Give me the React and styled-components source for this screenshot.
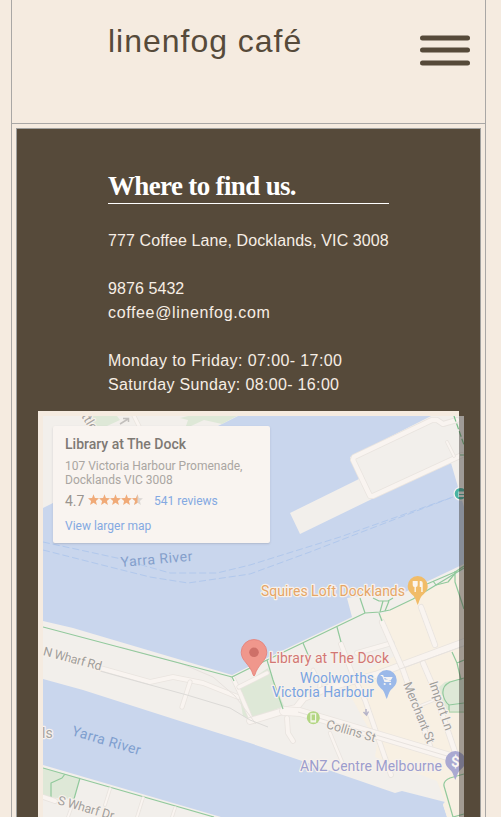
import React from "react";
import styled, { createGlobalStyle } from "styled-components";

const GlobalStyle = createGlobalStyle`
  * { box-sizing: border-box; }
  html, body { margin: 0; padding: 0; background: #f5ebe0; }
  body { height: 817px; overflow: hidden; }
`;

const Page = styled.div`
  height: 817px;
  width: 501px;
  padding: 0 15px 0 11px;
  background: #f5ebe0;
  color: #564a3a;
  overflow: hidden;
`;
const Frame = styled.div`
  height: 817px;
  border-left: 1px solid #a9a7a5;
  border-right: 1px solid #a9a7a5;
  display: flex;
  flex-direction: column;
`;
const Header = styled.header`
  flex: none;
  height: 124px;
  padding: 23px 15px 0 96px;
  border-bottom: 1px solid #a9a7a5;
  display: flex;
  justify-content: space-between;
  align-items: flex-start;
`;
const Logo = styled.div`
  font: 400 32px/37px "Liberation Sans", Arial, sans-serif;
  letter-spacing: 0.98px;
  white-space: nowrap;
`;
const MenuButton = styled.button`
  margin: 12px 0 0;
  padding: 0;
  border: 0;
  background: none;
  line-height: 0;
`;
const Main = styled.main`
  flex: 1;
  margin: 4px 4px 0;
  padding: 42px 16px 0 21px;
  border: 1px solid #a0a09e;
  border-bottom: 0;
  background: #564a3a;
`;
const Details = styled.section`
  margin-left: 70px;
  width: 281px;
  height: 240px;
  color: #f7eee5;
`;
const Heading = styled.h2`
  margin: 0 0 25px;
  height: 33px;
  border-bottom: 1px solid #fff;
  color: #fff;
  font: 700 27px/31px "Liberation Serif", "Times New Roman", serif;
  letter-spacing: ${(p) => p.$track}px;
  white-space: nowrap;
`;
const Group = styled.div`
  margin-bottom: 24px;
`;
const Line = styled.div`
  height: 24px;
  font: 400 16px/24px "Liberation Sans", Arial, sans-serif;
  letter-spacing: ${(p) => p.$track || 0}px;
  white-space: nowrap;
`;
const MapFrame = styled.div`
  position: relative;
  width: 421px;
  height: 406px;
  padding: 5px 0 0 5px;
  background: #f5ebe0;
`;
const MapSvg = styled.svg`
  display: block;
  width: 421px;
  height: 401px;
  overflow: hidden;
  margin-right: -5px;
  font-family: Roboto, Arial, sans-serif;
`;
const Card = styled.div`
  position: absolute;
  left: 15px;
  top: 15px;
  width: 217px;
  height: 117px;
  padding: 9px 12px;
  border-radius: 2px;
  background: #f9f4f0;
  box-shadow: 0 1px 2px rgba(80, 80, 90, 0.22);
  font: 400 12px/14px Roboto, Arial, sans-serif;
  color: #aaa6a2;
`;
const PlaceName = styled.div`
  font-size: 14px;
  line-height: 18px;
  font-weight: 500;
  color: #7e7974;
`;
const Address = styled.div`
  margin-top: 6px;
  white-space: nowrap;
`;
const Rating = styled.div`
  display: flex;
  align-items: center;
  height: 16px;
  margin-top: 6px;
`;
const Score = styled.span`
  width: 23px;
  font-size: 14px;
  color: #99948f;
`;
const MapLink = styled.span`
  color: #84a9e2;
  white-space: nowrap;
`;
const Stars = styled.svg`
  width: 56px;
  height: 12px;
  margin: -2px 10px 0 0;
`;
const LinkRow = styled.div`
  margin-top: 10px;
`;

const star = "M5.5 .2 6.9 4 11 4.3 7.9 6.9 8.9 10.9 5.5 8.7 2.1 10.9 3.1 6.9 0 4.3 4.1 4Z";

function Road({ d, w = 5 }) {
  return (
    <g fill="none" strokeLinecap="round" strokeLinejoin="round">
      <path d={d} stroke="#e9e4df" strokeWidth={w + 1.6} />
      <path d={d} stroke="#f9f4f0" strokeWidth={w} />
    </g>
  );
}

function Label({ x, y, r = 0, len, size = 14, color, halo = "#f7f1eb", children }) {
  return (
    <text
      x={x}
      y={y}
      transform={r ? `rotate(${r} ${x} ${y})` : undefined}
      textLength={len}
      fontSize={size}
      fill={color}
      stroke={halo}
      strokeWidth={halo === "none" ? 0 : 2.4}
      strokeLinejoin="round"
      paintOrder="stroke"
    >
      {children}
    </text>
  );
}

function Pin({ x, y, color, children }) {
  return (
    <g transform={`translate(${x} ${y})`}>
      <path
        d="M0 -10A10 10 0 0 0 -10 0C-10 5 -7 7 -4 10C-2 12.500 -1.500 16 0 19C1.500 16 2 12.500 4 10C7 7 10 5 10 0A10 10 0 0 0 0 -10Z"
        fill={color}
      />
      {children}
    </g>
  );
}

function MapDrawing() {
  return (
    <MapSvg viewBox="43 416 421 401">
      <rect x="43" y="416" width="421" height="401" fill="#c9d6ed" />

      <g fill="none" stroke="#b1c8ec" strokeWidth="1" strokeDasharray="7 3">
        <path d="M43 542 117 558 170 573 217 573 250 565 340 537 453 497" />
        <path d="M43 550 110 567 150 577 188 583 250 574 310 552 367 530 453 497" />
      </g>

      <g fill="#f2efeb">
        <path d="M43 416H238L218 426 53 503 43 508Z" />
        <path d="M464 416V507L458 487 451 463 372 499 300 534 290 513 359 479 350 457 431 416Z" />
        <path d="M43 621 73 628 232 675 250 666 267 658 352 617 347 598 365 595 405 592 464 564V817H447L443 805 445 802 402 791 395 793 250 743 183 722 83 690 43 679Z" />
        <path d="M43 765 221 817H43Z" />
      </g>
      <path d="M380 615 392 610 464 571V817H447L443 804 445 802 437 781 375 757 377 744 343 682 399 654Z" fill="#f8f0e3" />

      <g fill="#dee8d7">
        <path d="M88 416H117L120 420 107 426H95Z" />
        <path d="M180 418 188 416H237L222 424 204 420 191 426H186L188 420Z" />
        <path d="M238 688 262 672 268 668 284 706 250 720 243 716Z" />
        <path d="M439 687 445 682 464 678V711H448L440 703Z" />
        <path d="M43 768 80 778 74 799 43 797Z" />
      </g>

      <Road d="M134 416 141 430" w={3} />
      <path d="M120 424 128 419M123 418.500H128.500V422" fill="none" stroke="#c2bfbc" strokeWidth="1.500" />
      <Road d="M457 420 443 424 437 420 432 420 354 457 353 460 370 496 373 496 462 455" w={4.4} />
      <Road d="M447 442 454 456" w={2} />
      <path d="M454 416 464 445M460 455H464" fill="none" stroke="#78bd87" strokeWidth="1.200" strokeDasharray="6 2" />

      <Road d="M100 668 150 682 173 677 203 683 238 697" w={4} />
      <Road d="M190 682 182 707" w={3.5} />
      <Road d="M233 678 240 693 251 719" w={3.5} />
      <Road d="M239 687 267 673" w={3.5} />
      <Road d="M341 644 352 673 365 700 391 775" w={4} />
      <Road d="M313 670 320 684 319 694" w={3} />
      <Road d="M330 733 337 750 345 769" w={2.5} />
      <Road d="M287 718 288 733 293 741" w={4} />
      <Road d="M357 653 392 643" w={4} />
      <Road d="M417 707 442 697" w={1.600} />
      <Road d="M250 721 283 711 296 708 304 698 330 687 375 675 464 642" w={6} />
      <Road d="M382 622 403 670 432 752" w={4.500} />
      <Road d="M421 607 435 645M423 663 432 684 455 752" w={4.500} />
      <Road d="M284 711 300 712 464 761" w={8} />
      <g fill="none" stroke="#e7e2de" strokeWidth="1">
        <path d="M298 712 464 761M400 669 464 646" />
        <path d="M120 647 180 663 213 677 235 696 256 724" />
      </g>
      <path d="M100 671 143 683 187 695 230 708 250 720 268 727" fill="none" stroke="#dcdad7" strokeWidth="1" />

      <g fill="none" stroke="#91c99c" strokeWidth="1.200" strokeLinejoin="round">
        <path d="M43 627 232 677 250 668 267 660 365 613 380 612 390 610 413 599 464 568" />
        <path d="M232 677 234 681M267 660 273 680 283 709M303 643 309 657M337 627 341 642" />
        <path d="M360 598 365 613M373 598 379 601 388 601 393 598M383 601 380 612M389 601 385 611M379 613 382 621" />
        <path d="M427 584 455 572 464 566M433 581 436 585 448 582 457 571M455 571V582L464 609" />
        <path d="M452 652 457 663 461 680M457 663 464 660M464 678 450 682Q442 686 443 694 444 701 449 705V712H464M449 705 464 703" />
        <path d="M464 774 450 778Q443 781 444 786L453 817 464 814" />
        <path d="M43 768 214 817M65 774 62 778 51 783V798M80 778 74 799" />
      </g>
      <Road d="M43 797 55 801" w={4} />
      <Road d="M110 789 105 805M143 798 137 817M175 808 172 817M73 803 68 817" w={2} />

      <g>
        <circle cx="460.500" cy="493.700" r="7" fill="#f9f4f0" />
        <circle cx="460.500" cy="493.700" r="5.800" fill="#48b3a3" />
        <path d="M458.500 491.500H464V497H458.500Z" fill="#f2efeb" />
        <path d="M459 494.500H464" stroke="#48b3a3" strokeWidth="1" />
      </g>
      <path d="M366 709V715M363.500 712 366.500 715 368.500 711.500" fill="none" stroke="#b5b3c8" strokeWidth="1.500" />

      <Label x={81} y={416} r={58} size={13} color="#a5a3a0">ttle</Label>
      <Label x={121} y={567} r={-5} len={72} color="#849fcb" halo="none">Yarra River</Label>
      <Label x={71} y={735} r={16.500} len={71} color="#7f9fcf" halo="none">Yarra River</Label>
      <Label x={42} y={738} color="#a5a3a0">ls</Label>
      <Label x={42.500} y={655} r={15} len={60} size={12.500} color="#a09e9b">N Wharf Rd</Label>
      <Label x={57} y={804} r={16} len={58} size={12.500} color="#a09e9b">S Wharf Dr</Label>
      <Label x={325.500} y={728} r={16} len={51} size={12.500} color="#a09e9b">Collins St</Label>
      <Label x={403} y={684} r={68} len={65} size={12.500} color="#a09e9b">Merchant St</Label>
      <Label x={429} y={683} r={71} len={51} size={12.500} color="#a09e9b">Import Ln</Label>
      <Label x={261} y={596} len={144} color="#e5a566">Squires Loft Docklands</Label>
      <Label x={269} y={663} len={120} color="#d27774">Library at The Dock</Label>
      <Label x={300} y={683} len={74} color="#79a4e2">Woolworths</Label>
      <Label x={272} y={697} len={102} color="#79a4e2">Victoria Harbour</Label>
      <Label x={300} y={771} len={142} color="#9c9dce">ANZ Centre Melbourne</Label>

      <path
        d="M254 639.500A12.800 12.800 0 0 0 241.200 652.300C241.200 661 250 664 253.200 675Q254 677 254.800 675C258 664 266.800 661 266.800 652.300A12.800 12.800 0 0 0 254 639.500Z"
        fill="#f0978c"
        stroke="#e47f77"
        strokeWidth=".8"
      />
      <circle cx="254" cy="652.300" r="4.800" fill="#ce7068" />
      <Pin x={417.700} y={586} color="#f1bc68">
        <path d="M-5 -5V-1Q-5 1 -3.200 1V6H-1.800V1Q0 1 0 -1V-5ZM2 -5H3Q5 -5 5 -3V6H3.500V1H2Z" fill="#fbf5ed" />
      </Pin>
      <Pin x={386.700} y={680} color="#9bb9e9">
        <path d="M-6 -4.500H-4L-1.800 1.500H4.200M-3.400 -2.500H5L3.600 0H-2.500" fill="#f5f3f2" stroke="#f5f3f2" strokeWidth="1.200" />
        <circle cx="-2" cy="4" r="1.100" fill="#f5f3f2" />
        <circle cx="3.500" cy="4" r="1.100" fill="#f5f3f2" />
      </Pin>
      <Pin x={455.300} y={761} color="#aaa9d1">
        <text x="0" y="5.500" textAnchor="middle" fontSize="15" fontWeight="700" fill="#faf6f2">$</text>
      </Pin>
      <circle cx="313.300" cy="717.700" r="6.500" fill="#b3d683" />
      <path d="M311 713.800H315.600V720.800H311ZM310.500 722H316" fill="none" stroke="#f4f5e9" strokeWidth="1.200" />

      <rect x="459" y="416" width="5" height="401" fill="#302c28" opacity=".43" />
    </MapSvg>
  );
}

export default function App() {
  return (
    <>
      <GlobalStyle />
      <Page>
        <Frame>
          <Header>
            <Logo>linenfog café</Logo>
            <MenuButton aria-label="Menu">
              <svg width="50" height="31" viewBox="0 0 50 31" fill="#564a3a">
                <rect y=".4" width="50" height="5.200" rx="2.500" />
                <rect y="12.400" width="50" height="5.200" rx="2.500" />
                <rect y="25.400" width="50" height="5.200" rx="2.500" />
              </svg>
            </MenuButton>
          </Header>
          <Main>
            <Details>
              <Heading $track={-0.65}>Where to find us.</Heading>
              <Group>
                <Line $track={0.1}>777 Coffee Lane, Docklands, VIC 3008</Line>
              </Group>
              <Group>
                <Line $track={0.08}>9876 5432</Line>
                <Line $track={0.64}>coffee@linenfog.com</Line>
              </Group>
              <Group>
                <Line $track={0.4}>Monday to Friday: 07:00- 17:00</Line>
                <Line $track={0.34}>Saturday Sunday: 08:00- 16:00</Line>
              </Group>
            </Details>
            <MapFrame>
              <MapDrawing />
              <Card>
                <PlaceName>Library at The Dock</PlaceName>
                <Address>
                  107 Victoria Harbour Promenade,
                  <br />
                  Docklands VIC 3008
                </Address>
                <Rating>
                  <Score>4.7</Score>
                  <Stars viewBox="0 0 56 12">
                    {[0, 1, 2, 3].map((i) => (
                      <path key={i} d={star} transform={`translate(${i * 11} 0)`} fill="#f0aa78" />
                    ))}
                    <path d={star} transform="translate(44 0)" fill="#dcd8d5" />
                    <path d="M5.500 .2V8.700L2.100 10.900 3.100 6.900 0 4.300 4.100 4Z" transform="translate(44 0)" fill="#f0aa78" />
                  </Stars>
                  <MapLink>541 reviews</MapLink>
                </Rating>
                <LinkRow>
                  <MapLink>View larger map</MapLink>
                </LinkRow>
              </Card>
            </MapFrame>
          </Main>
        </Frame>
      </Page>
    </>
  );
}
